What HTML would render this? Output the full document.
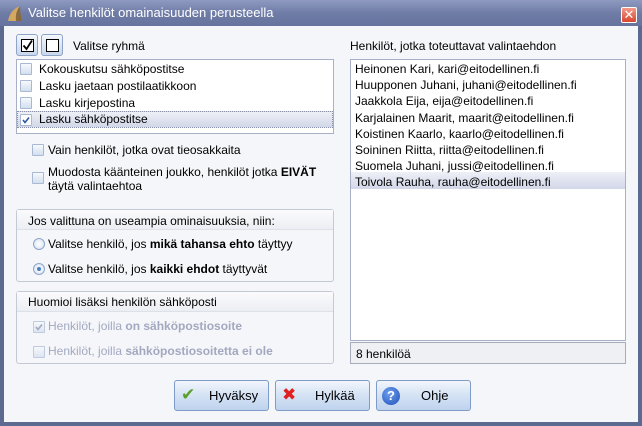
<!DOCTYPE html>
<html><head><meta charset="utf-8"><style>
*{box-sizing:border-box;margin:0;padding:0}
body{width:642px;height:426px;overflow:hidden;font-family:"Liberation Sans","DejaVu Sans",sans-serif;font-size:12px;color:#000;position:relative;background:#5c6a92}
.a{position:absolute;white-space:nowrap}
#title{left:0;top:0;width:642px;height:26px;background:linear-gradient(#8e9ac0,#6f7ca6 50%,#66739e);color:#fff;font-size:13px}
#body{left:4px;top:26px;width:634px;height:396px;background:#f5f6f9}
.cbtn{width:22px;height:22px;border:1px solid #8ea3c8;border-radius:3px;background:linear-gradient(#f4f7fc,#c9d6ec)}
.cbin{position:absolute;left:4px;top:4px;width:13px;height:13px;border:1.5px solid #000;background:#fff}
.box{background:#fff;border:1px solid #a8b0c8}
.cb{width:12px;height:12px;border:1px solid #a9b9d4;background:linear-gradient(#f7f9fd,#d3deef);border-radius:1px}
.grp{border:1px solid #c4c9d6;border-radius:3px;background:#f5f6f9}
.gh{position:absolute;left:0;top:0;right:0;height:20px;background:linear-gradient(#fbfbfd,#eceef3);border-bottom:1px solid #dde1ea}
.rad{width:12px;height:12px;border-radius:50%;border:1px solid #8fa6c9;background:radial-gradient(#fff,#d4e0f0)}
.btn{height:31px;width:95px;border:1px solid #7e9cc7;border-radius:3px;background:linear-gradient(#f2f6fc,#d4e2f4 50%,#bfd3ee);font-size:13px}
.dis{color:#a3a8c0}
</style></head><body>
<div id="title" class="a"><svg class="a" style="left:6px;top:4px" width="18" height="18"><path d="M2 17 Q4 6 14 2 Q9 8 10 17 Z" fill="#d4a860"/><path d="M10 17 Q9 8 14 2 Q14 10 16 17Z" fill="#8a6a3a"/></svg><span class="a" style="left:28px;top:5px">Valitse henkilöt omainaisuuden perusteella</span>
<div class="a" style="left:621px;top:7px;width:16px;height:16px;background:linear-gradient(#f29a8a,#d8462e);border:1px solid #fff;border-radius:2px;color:#fff;font-size:13px;font-weight:bold;text-align:center;line-height:14px">✕</div></div>
<div id="body" class="a"></div>
<div class="a cbtn" style="left:16px;top:34px"><div class="cbin"></div><svg class="a" style="left:4px;top:4px" width="13" height="13"><path d="M2.5 6.5 L5.5 10 L11 1.5" stroke="#000" stroke-width="1.8" fill="none"/></svg></div>
<div class="a cbtn" style="left:41px;top:34px"><div class="cbin"></div></div>
<span class="a" style="left:73px;top:39px">Valitse ryhmä</span>
<div class="a box" style="left:16px;top:59px;width:318px;height:75px"></div>
<div class="a cb" style="left:20px;top:63px"></div><span class="a" style="left:39px;top:62px">Kokouskutsu sähköpostitse</span>
<div class="a cb" style="left:20px;top:80px"></div><span class="a" style="left:39px;top:79px">Lasku jaetaan postilaatikkoon</span>
<div class="a cb" style="left:20px;top:97px"></div><span class="a" style="left:39px;top:96px">Lasku kirjepostina</span>
<div class="a" style="left:17px;top:111px;width:316px;height:17px;background:linear-gradient(#eef0f7,#d2d7e8);border:1px dotted #8a90a8"></div>
<div class="a cb" style="left:20px;top:114px;background:#fff"></div><svg class="a" style="left:20px;top:114px" width="12" height="12"><path d="M3 6 L5 8.5 L9 3.5" stroke="#2a5aa0" stroke-width="1.6" fill="none"/></svg><span class="a" style="left:39px;top:112px">Lasku sähköpostitse</span>
<div class="a cb" style="left:32px;top:144px"></div><span class="a" style="left:48px;top:143px">Vain henkilöt, jotka ovat tieosakkaita</span>
<div class="a cb" style="left:32px;top:172px"></div><span class="a" style="left:48px;top:165px">Muodosta käänteinen joukko, henkilöt jotka <b>EIVÄT</b></span><span class="a" style="left:48px;top:179px">täytä valintaehtoa</span>
<div class="a grp" style="left:16px;top:209px;width:318px;height:73px"><div class="gh"></div><span class="a" style="left:11px;top:4px">Jos valittuna on useampia ominaisuuksia, niin:</span>
<div class="a rad" style="left:16px;top:28px"></div><span class="a" style="left:31px;top:27px">Valitse henkilö, jos <b>mikä tahansa ehto</b> täyttyy</span>
<div class="a rad" style="left:16px;top:53px"><div class="a" style="left:3px;top:3px;width:4px;height:4px;border-radius:50%;background:#4a7fc4"></div></div><span class="a" style="left:31px;top:52px">Valitse henkilö, jos <b>kaikki ehdot</b> täyttyvät</span></div>
<div class="a grp" style="left:16px;top:291px;width:318px;height:73px"><div class="gh"></div><span class="a" style="left:11px;top:3px">Huomioi lisäksi henkilön sähköposti</span>
<div class="a cb" style="left:16px;top:29px;opacity:.7"></div><svg class="a" style="left:16px;top:29px" width="12" height="12"><path d="M3 6 L5 8.5 L9 3.5" stroke="#a3a8c0" stroke-width="1.6" fill="none"/></svg><span class="a dis" style="left:31px;top:27px">Henkilöt, joilla <b>on sähköpostiosoite</b></span>
<div class="a cb" style="left:16px;top:54px;opacity:.7"></div><span class="a dis" style="left:31px;top:52px">Henkilöt, joilla <b>sähköpostiosoitetta ei ole</b></span></div>
<span class="a" style="left:350px;top:39px">Henkilöt, jotka toteuttavat valintaehdon</span>
<div class="a box" style="left:350px;top:59px;width:276px;height:282px"></div>
<div class="a" style="left:351px;top:172px;width:274px;height:17px;background:linear-gradient(#eef0f7,#d2d7e8)"></div>
<div class="a" style="left:355px;top:61px;line-height:16.2px">Heinonen Kari, kari@eitodellinen.fi<br>Huupponen Juhani, juhani@eitodellinen.fi<br>Jaakkola Eija, eija@eitodellinen.fi<br>Karjalainen Maarit, maarit@eitodellinen.fi<br>Koistinen Kaarlo, kaarlo@eitodellinen.fi<br>Soininen Riitta, riitta@eitodellinen.fi<br>Suomela Juhani, jussi@eitodellinen.fi<br>Toivola Rauha, rauha@eitodellinen.fi</div>
<div class="a" style="left:350px;top:342px;width:276px;height:22px;background:#eef0f4;border:1px solid #a8adbb"></div>
<span class="a" style="left:356px;top:347px">8 henkilöä</span>
<div class="a btn" style="left:174px;top:380px"><span class="a" style="left:6px;top:4px;color:#5aa02a;font-size:17px;font-weight:bold">✔</span><span class="a" style="left:34px;top:7px">Hyväksy</span></div>
<div class="a btn" style="left:275px;top:380px"><span class="a" style="left:6px;top:4px;color:#e02020;font-size:17px;font-weight:bold">✖</span><span class="a" style="left:39px;top:7px">Hylkää</span></div>
<div class="a btn" style="left:376px;top:380px"><div class="a" style="left:5px;top:6px;width:18px;height:18px;border-radius:50%;background:radial-gradient(circle at 40% 35%,#6fa0f0,#1e4fb8);color:#fff;font-weight:bold;text-align:center;line-height:18px;font-size:13px">?</div><span class="a" style="left:44px;top:7px">Ohje</span></div>
</body></html>
